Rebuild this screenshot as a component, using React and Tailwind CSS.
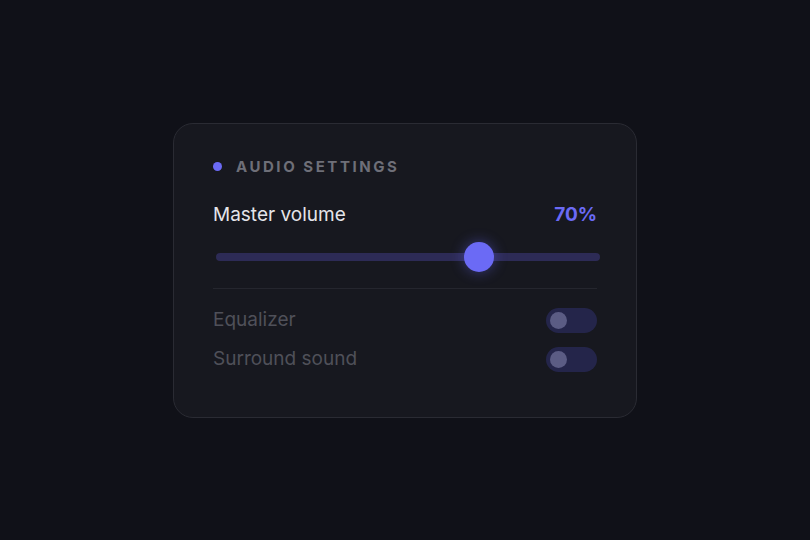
export default function App() {
  const volume = 70;
  return (
    <div
      className="min-h-screen w-full bg-[#101118] flex items-center justify-center"
      style={{ fontFamily: "Inter, 'Noto Sans', sans-serif" }}
    >
      <div className="w-[464px] h-[295px] rounded-[20px] border border-[#2a2b33] bg-[#17181f] px-[39px] pt-[33px]">
        <div className="flex items-center h-[20px] gap-[14px]">
          <span className="w-[9px] h-[9px] rounded-full bg-[#6b6af5]" />
          <span className="text-[15px] font-bold tracking-[0.17em] text-[#6e6f78] leading-none">
            AUDIO SETTINGS
          </span>
        </div>

        <div className="mt-[27px] flex items-center justify-between h-[24px]">
          <span className="text-[19px] text-[#e4e4e9]">Master volume</span>
          <span className="text-[19px] font-bold text-[#6b6af5]">{volume}%</span>
        </div>

        <div className="mt-[14px] relative h-[30px] ml-[3px] mr-[-3px]">
          <div className="absolute left-0 right-0 top-[11px] h-[8px] rounded-full bg-[#2d2b56]" />
          <div
            className="absolute top-0 w-[30px] h-[30px] rounded-full bg-[#6b6af5] shadow-[0_0_14px_rgba(99,102,241,0.45)]"
            style={{ left: `calc((100% - 30px) * ${volume / 100})` }}
          />
        </div>

        <div className="mt-[16px] h-px bg-[#25262e]" />

        <div className="mt-[20px] flex items-center justify-between h-[24px]">
          <span className="text-[19px] text-[#4f5059]">Equalizer</span>
          <Toggle />
        </div>
        <div className="mt-[15px] flex items-center justify-between h-[24px]">
          <span className="text-[19px] text-[#4f5059]">Surround sound</span>
          <Toggle />
        </div>
      </div>
    </div>
  );
}

function Toggle() {
  return (
    <div className="w-[51px] h-[25px] rounded-full bg-[#24254a] flex items-center px-[4px]">
      <span className="w-[17px] h-[17px] rounded-full bg-[#5b5c84]" />
    </div>
  );
}
